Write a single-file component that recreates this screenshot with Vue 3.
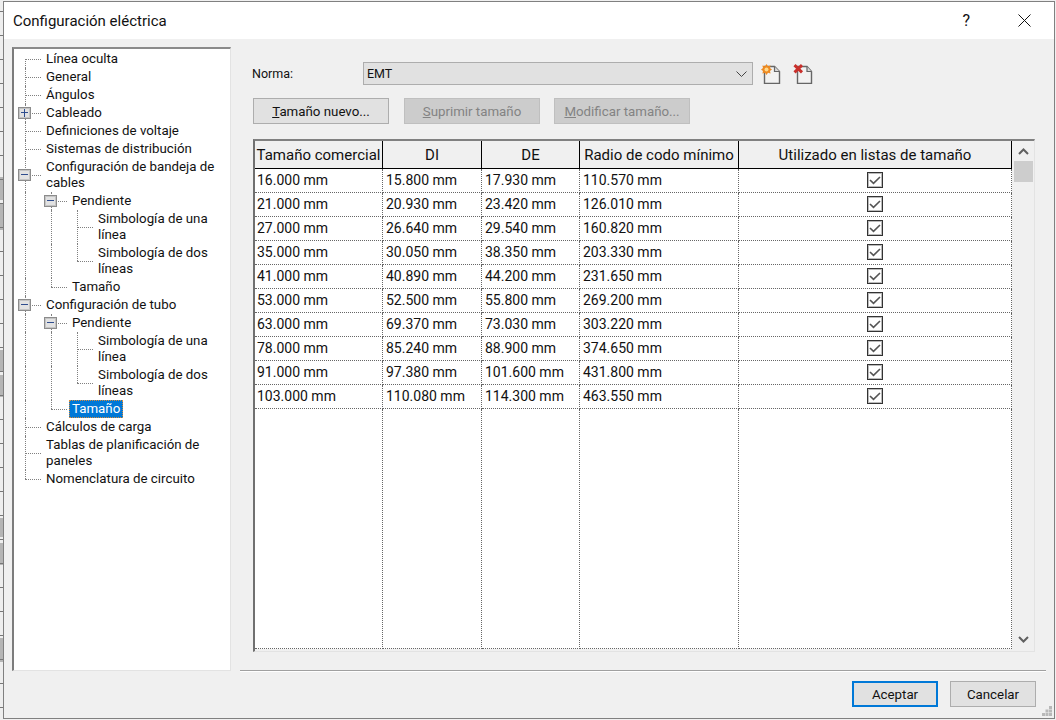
<template>
  <div class="page">
    <div class="dialog">
      <header class="titlebar">
        <span class="title">Configuración eléctrica</span>
        <span class="help">?</span>
        <svg class="close" width="13" height="13" viewBox="0 0 13 13">
          <path d="M0.5 0.5L12.5 12.5M12.5 0.5L0.5 12.5" stroke="#111" fill="none" />
        </svg>
      </header>

      <div class="main">
        <nav class="tree">
          <div v-for="(row, i) in treeRows" :key="i" class="tree-row">
            <span v-for="(g, j) in row.guides" :key="j" :class="['guide', g]">
              <span v-if="row.exp && j === row.guides.length - 1" class="expander">
                <i class="dash"></i>
                <i v-if="row.exp === '+'" class="bar"></i>
              </span>
            </span>
            <span :class="['tree-label', { selected: row.selected }]">{{ row.label }}</span>
          </div>
        </nav>

        <section class="pane">
          <div class="norma-row">
            <label class="norma-label">Norma:</label>
            <div class="combo">
              <span>EMT</span>
              <svg width="11" height="6" viewBox="0 0 11 6">
                <path d="M0.5 0.5L5.5 5.5L10.5 0.5" stroke="#444" fill="none" />
              </svg>
            </div>
            <svg class="page-icon first" width="20" height="20" viewBox="0 0 20 20">
              <path d="M3.5 2.5H13.5L18.5 7.5V19.5H3.5Z" fill="#f2f2f2" stroke="#666" stroke-width="1.4" />
              <path d="M13.5 2.5V7.5H18.5" fill="#d8d8d8" stroke="#666" stroke-width="1.2" />
              <path d="M5.5 0L7 2.2L9.6 1.4L9 4L11 5.5L9 7L9.6 9.6L7 8.8L5.5 11L4 8.8L1.4 9.6L2 7L0 5.5L2 4L1.4 1.4L4 2.2Z" fill="#ee8a22" />
              <circle cx="5.5" cy="5.5" r="2" fill="#ffd98a" />
            </svg>
            <svg class="page-icon" width="20" height="20" viewBox="0 0 20 20">
              <path d="M4.5 2.5H14L18.5 7.5V19.5H4.5Z" fill="#f2f2f2" stroke="#666" stroke-width="1.4" />
              <path d="M14 2.5V7.5H18.5" fill="#d8d8d8" stroke="#666" stroke-width="1.2" />
              <path d="M1.5 1.2L9 8.4M9 1.2L1.5 8.4" stroke="#c9302c" stroke-width="3" fill="none" />
            </svg>
          </div>

          <div class="actions">
            <button class="btn wide"><u>T</u>amaño nuevo...</button>
            <button class="btn wide disabled"><u>S</u>uprimir tamaño</button>
            <button class="btn wide disabled last"><u>M</u>odificar tamaño...</button>
          </div>

          <div class="table-frame">
            <div class="grid">
              <div v-for="h in headers" :key="h" class="head">{{ h }}</div>
              <template v-for="row in sizes" :key="row[0]">
                <div v-for="(val, k) in row" :key="k" :class="['cell', { first: k === 0 }]">{{ val }}</div>
                <div class="cell check-cell">
                  <span class="checkbox">
                    <svg width="14" height="14" viewBox="0 0 14 14">
                      <path d="M2 7L5.5 10.4L12 4" stroke="#555" stroke-width="1.6" fill="none" />
                    </svg>
                  </span>
                </div>
              </template>
              <div v-for="n in 5" :key="'fill' + n" class="cell"></div>
            </div>
            <div class="scrollbar">
              <div class="arrow">
                <svg width="11" height="7" viewBox="0 0 11 7">
                  <path d="M1 6L5.5 1.5L10 6" stroke="#606060" stroke-width="2" fill="none" />
                </svg>
              </div>
              <div class="thumb"></div>
              <div class="track"></div>
              <div class="arrow">
                <svg width="11" height="7" viewBox="0 0 11 7">
                  <path d="M1 1L5.5 5.5L10 1" stroke="#606060" stroke-width="2" fill="none" />
                </svg>
              </div>
            </div>
          </div>
        </section>
      </div>

      <footer class="footer">
        <button class="btn foot primary">Aceptar</button>
        <button class="btn foot">Cancelar</button>
        <svg class="grip" width="10" height="10" viewBox="0 0 10 10" fill="#b8b8b8">
          <rect x="7" y="0" width="3" height="3" />
          <rect x="3.5" y="3.5" width="3" height="3" />
          <rect x="7" y="3.5" width="3" height="3" />
          <rect x="0" y="7" width="3" height="3" />
          <rect x="3.5" y="7" width="3" height="3" />
          <rect x="7" y="7" width="3" height="3" />
        </svg>
      </footer>
    </div>
  </div>
</template>

<script setup>
const treeRows = [
  { label: 'Línea oculta', guides: ['start'] },
  { label: 'General', guides: ['tee'] },
  { label: 'Ángulos', guides: ['tee'] },
  { label: 'Cableado', guides: ['tee'], exp: '+' },
  { label: 'Definiciones de voltaje', guides: ['tee'] },
  { label: 'Sistemas de distribución', guides: ['tee'] },
  { label: 'Configuración de bandeja de\ncables', guides: ['tee'], exp: '-' },
  { label: 'Pendiente', guides: ['pass', 'tee'], exp: '-' },
  { label: 'Simbología de una\nlínea', guides: ['pass', 'pass', 'tee'] },
  { label: 'Simbología de dos\nlíneas', guides: ['pass', 'pass', 'end'] },
  { label: 'Tamaño', guides: ['pass', 'end'] },
  { label: 'Configuración de tubo', guides: ['tee'], exp: '-' },
  { label: 'Pendiente', guides: ['pass', 'tee'], exp: '-' },
  { label: 'Simbología de una\nlínea', guides: ['pass', 'pass', 'tee'] },
  { label: 'Simbología de dos\nlíneas', guides: ['pass', 'pass', 'end'] },
  { label: 'Tamaño', guides: ['pass', 'end'], selected: true },
  { label: 'Cálculos de carga', guides: ['tee'] },
  { label: 'Tablas de planificación de\npaneles', guides: ['tee'] },
  { label: 'Nomenclatura de circuito', guides: ['end'] },
]

const headers = ['Tamaño comercial', 'DI', 'DE', 'Radio de codo mínimo', 'Utilizado en listas de tamaño']

const sizes = [
  ['16.000 mm', '15.800 mm', '17.930 mm', '110.570 mm'],
  ['21.000 mm', '20.930 mm', '23.420 mm', '126.010 mm'],
  ['27.000 mm', '26.640 mm', '29.540 mm', '160.820 mm'],
  ['35.000 mm', '30.050 mm', '38.350 mm', '203.330 mm'],
  ['41.000 mm', '40.890 mm', '44.200 mm', '231.650 mm'],
  ['53.000 mm', '52.500 mm', '55.800 mm', '269.200 mm'],
  ['63.000 mm', '69.370 mm', '73.030 mm', '303.220 mm'],
  ['78.000 mm', '85.240 mm', '88.900 mm', '374.650 mm'],
  ['91.000 mm', '97.380 mm', '101.600 mm', '431.800 mm'],
  ['103.000 mm', '110.080 mm', '114.300 mm', '463.550 mm'],
]
</script>

<style>
html,
body {
  margin: 0;
  background: #f0f0f0;
}
</style>

<style scoped>
.page {
  width: 1056px;
  height: 720px;
  box-sizing: border-box;
  padding: 1px 1px 1px 3px;
  font-family: Roboto, "Liberation Sans", sans-serif;
  color: #111;
  /* bits of the window behind the dialog, left edge only */
  background:
    repeating-linear-gradient(transparent 0 12px, #777 12px 13px, transparent 13px 24px) 0 -1px / 3px 100% no-repeat,
    linear-gradient(
      #eee 177px, #b5b5b5 177px 200px, #eee 200px 204px, #b5b5b5 204px 230px, #eee 230px 350px,
      #b5b5b5 350px 371px, #eee 371px 375px, #b5b5b5 375px 397px, #eee 397px 518px,
      #b5b5b5 518px 537px, #eee 537px 543px, #b5b5b5 543px 565px, #eee 565px 638px,
      #b5b5b5 638px 662px, #eee 662px
    ) 0 0 / 3px 100% no-repeat;
}

.dialog {
  position: relative;
  height: 100%;
  box-sizing: border-box;
  border: 1px solid #808080;
  background: #f0f0f0;
  display: flex;
  flex-direction: column;
}

.titlebar {
  height: 37px;
  flex-shrink: 0;
  background: #fff;
  display: flex;
  align-items: center;
  padding: 0 23px 0 9px;
}

.title {
  font-size: 15px;
  flex: 1;
}

.help {
  font-size: 16px;
  margin-right: 48px;
}

.main {
  flex: 1;
  min-height: 0;
  display: flex;
  padding: 8px 8px 0 8px;
}

.tree {
  width: 219px;
  box-sizing: border-box;
  padding-top: 1px;
  background: #fff;
  border-top: 2px solid #8a8a8a;
  border-left: 2px solid #7c7c7c;
  border-right: 1px solid #e3e3e3;
  border-bottom: 1px solid #e3e3e3;
  font-size: 13.3px;
  line-height: 16px;
}

.tree-row {
  display: flex;
  align-items: stretch;
}

.guide {
  position: relative;
  width: 26px;
  flex-shrink: 0;
}

.guide::before,
.guide::after {
  content: "";
  position: absolute;
}

.pass::before,
.tee::before {
  left: 11px;
  top: 0;
  bottom: 0;
  border-left: 1px dotted #808080;
}

.start::before {
  left: 11px;
  top: 50%;
  bottom: 0;
  border-left: 1px dotted #808080;
}

.end::before {
  left: 11px;
  top: 0;
  height: 50%;
  border-left: 1px dotted #808080;
}

.start::after,
.tee::after,
.end::after {
  left: 11px;
  width: 16px;
  top: 50%;
  border-top: 1px dotted #808080;
}

.expander {
  position: absolute;
  z-index: 1;
  left: 4px;
  top: 50%;
  margin-top: -6px;
  width: 13px;
  height: 12px;
  box-sizing: border-box;
  border: 1px solid #8c8c8c;
  box-shadow: inset 0 0 0 1px #c4c4c4;
  background: #e2e2e2;
}

.dash {
  position: absolute;
  left: 2px;
  right: 2px;
  top: 4px;
  height: 1px;
  background: #2f4d8e;
}

.bar {
  position: absolute;
  left: 5px;
  top: 1px;
  bottom: 1px;
  width: 1px;
  background: #2f4d8e;
}

.tree-label {
  margin-left: 3px;
  padding: 1px 3px;
  white-space: pre-line;
}

.tree-label.selected {
  background: #0078d7;
  color: #fff;
  outline: 1px dotted #d98c3a;
  outline-offset: -1px;
}

.pane {
  flex: 1;
  min-width: 0;
  margin-left: 9px;
  box-sizing: border-box;
  padding: 15px 11px 18px 13px;
  border-bottom: 1px solid #a0a0a0;
  box-shadow: 0 1px 0 #fff;
  display: flex;
  flex-direction: column;
}

.norma-row {
  display: flex;
  align-items: center;
  height: 23px;
  font-size: 12.5px;
}

.norma-label {
  width: 110px;
  margin-left: -1px;
  margin-right: 1px;
}

.combo {
  width: 390px;
  height: 23px;
  box-sizing: border-box;
  border: 1px solid #adadad;
  background: #e1e1e1;
  display: flex;
  align-items: center;
  justify-content: space-between;
  padding: 0 5px 0 3px;
}

.page-icon {
  margin-left: 12px;
  margin-top: 1px;
}

.page-icon.first {
  margin-left: 8px;
}

.actions {
  display: flex;
  gap: 15px;
  margin-top: 13px;
}

.btn {
  height: 26px;
  box-sizing: border-box;
  border: 1px solid #adadad;
  background: #e1e1e1;
  font: inherit;
  font-size: 13.3px;
  color: #111;
  padding: 0;
}

.btn.wide {
  width: 136px;
}

.btn.last {
  margin-left: -1px;
}

.btn.disabled {
  background: #ccc;
  border-color: #bfbfbf;
  color: #838383;
}

.table-frame {
  flex: 1;
  min-height: 0;
  margin-top: 15px;
  display: flex;
  box-sizing: border-box;
  border-top: 2px solid #808080;
  border-left: 2px solid #707070;
  border-right: 1px solid #e3e3e3;
  border-bottom: 1px solid #e3e3e3;
  background: #f0f0f0;
}

.grid {
  display: grid;
  grid-template-columns: 128px 99px 98px 159px 273px;
  grid-template-rows: 28px repeat(10, 24px) 1fr;
  margin-bottom: 2px;
  background: #fff;
  font-size: 14px;
}

.head {
  background: #f0f0f0;
  border-right: 1px solid #000;
  border-bottom: 1px solid #000;
  display: flex;
  align-items: center;
  justify-content: center;
  white-space: nowrap;
  font-size: 15px;
  box-sizing: border-box;
}

.cell {
  border-right: 1px dotted #666;
  border-bottom: 1px dotted #666;
  display: flex;
  align-items: center;
  padding: 0 0 2px 3px;
  box-sizing: border-box;
  white-space: nowrap;
}

.cell.first {
  padding-left: 2px;
}

.check-cell {
  justify-content: center;
  padding: 0 0 1px;
}

.checkbox {
  width: 16px;
  height: 16px;
  box-sizing: border-box;
  border: 1px solid #333;
  box-shadow: inset 0 0 0 1px #bbb;
  background: #fff;
  display: flex;
  align-items: center;
  justify-content: center;
}

.scrollbar {
  flex: 1;
  padding: 0 1px 2px 2px;
  display: flex;
  flex-direction: column;
}

.arrow {
  height: 20px;
  display: flex;
  align-items: center;
  justify-content: center;
  flex-shrink: 0;
}

.thumb {
  height: 21px;
  background: #cdcdcd;
  flex-shrink: 0;
}

.track {
  flex: 1;
}

.footer {
  height: 47px;
  flex-shrink: 0;
  display: flex;
  justify-content: flex-end;
  gap: 12px;
  padding: 10px 18px 0 0;
  box-sizing: border-box;
  position: relative;
}

.btn.foot {
  width: 86px;
}

.btn.primary {
  border: 2px solid #0078d7;
}

.grip {
  position: absolute;
  right: 2px;
  bottom: 2px;
}
</style>
